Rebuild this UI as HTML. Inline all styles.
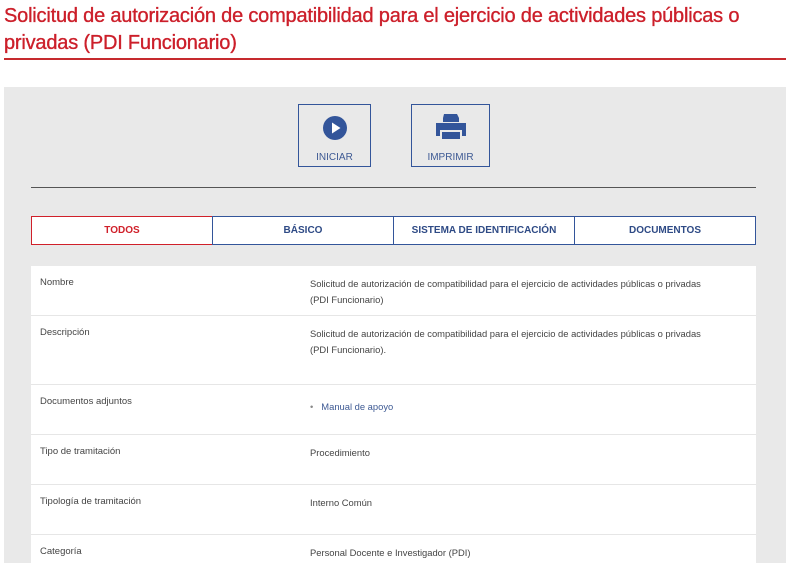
<!DOCTYPE html>
<html><head><meta charset="utf-8"><style>
body{margin:0;background:#fff;font-family:"Liberation Sans",sans-serif;width:786px;height:563px;overflow:hidden;position:relative}
h1{position:absolute;left:4px;top:3px;margin:0;font-size:20px;line-height:27px;color:#cc1f2a;font-weight:normal;letter-spacing:-0.2px;width:745px;-webkit-text-stroke:0.35px #cc1f2a}
.rl{position:absolute;left:4px;right:0;top:58px;height:2px;background:#c62a2e}
.gray{position:absolute;left:4px;right:0;top:87px;bottom:0;background:#e9e9e9}
.btn{position:absolute;top:104px;height:63px;border:1px solid #33559a;box-sizing:border-box;text-align:center;font-size:10px;color:#3e5a94}
.btn span{position:absolute;left:0;right:0;top:47px}
.hr{position:absolute;left:31px;width:725px;top:187px;height:1px;background:#555}
.tab{position:absolute;top:216px;height:29px;box-sizing:border-box;border:1px solid #33559a;background:#fff;font-size:10px;font-weight:bold;color:#2e4a85;text-align:center;line-height:28px}
.tab.a{border-color:#d0202a;color:#d0202a}
.tbl{position:absolute;left:31px;width:725px;top:266px;bottom:0;background:#fff}
.row{position:absolute;left:0;right:0;border-bottom:1px solid #e6e6e6;font-size:9.5px;color:#444}
.row .l{position:absolute;left:9px;top:11px}
.row .v{position:absolute;left:279px;top:10px;width:440px;line-height:15.5px;font-size:9.4px}
</style></head><body>
<h1>Solicitud de autorización de compatibilidad para el ejercicio de actividades públicas o privadas (PDI Funcionario)</h1>
<div class="rl"></div>
<div class="gray"></div>
<div class="btn" style="left:298px;width:73px">
<svg style="position:absolute;left:24px;top:11px" width="24" height="24" viewBox="0 0 24 24"><circle cx="12" cy="12" r="12" fill="#33559a"/><path d="M9 6.5L17.5 12L9 17.5Z" fill="#fff"/></svg>
<span>INICIAR</span></div>
<div class="btn" style="left:411px;width:79px">
<svg style="position:absolute;left:24px;top:9px" width="30" height="25" viewBox="0 0 30 25"><path d="M8 0h13l2 4v4H7V4z" fill="#33559a"/><path d="M0 9h30v13h-4v-6H4v6H0z" fill="#33559a"/><rect x="6" y="18" width="18" height="7" fill="#33559a"/></svg>
<span>IMPRIMIR</span></div>
<div class="hr"></div>
<div class="tab a" style="left:31px;width:182px">TODOS</div>
<div class="tab" style="left:212px;width:182px">BÁSICO</div>
<div class="tab" style="left:393px;width:182px">SISTEMA DE IDENTIFICACIÓN</div>
<div class="tab" style="left:574px;width:182px">DOCUMENTOS</div>
<div class="tbl">
<div class="row" style="top:0;height:49px"><div class="l">Nombre</div><div class="v">Solicitud de autorización de compatibilidad para el ejercicio de actividades públicas o privadas<br>(PDI Funcionario)</div></div>
<div class="row" style="top:50px;height:68px"><div class="l">Descripción</div><div class="v">Solicitud de autorización de compatibilidad para el ejercicio de actividades públicas o privadas<br>(PDI Funcionario).</div></div>
<div class="row" style="top:119px;height:49px"><div class="l">Documentos adjuntos</div><div class="v" style="top:14px"><span style="color:#888;margin-right:8px">•</span><span style="color:#3e5a94">Manual de apoyo</span></div></div>
<div class="row" style="top:169px;height:49px"><div class="l">Tipo de tramitación</div><div class="v">Procedimiento</div></div>
<div class="row" style="top:219px;height:49px"><div class="l">Tipología de tramitación</div><div class="v">Interno Común</div></div>
<div class="row" style="top:269px;height:49px;border:0"><div class="l">Categoría</div><div class="v">Personal Docente e Investigador (PDI)</div></div>
</div>
</body></html>
